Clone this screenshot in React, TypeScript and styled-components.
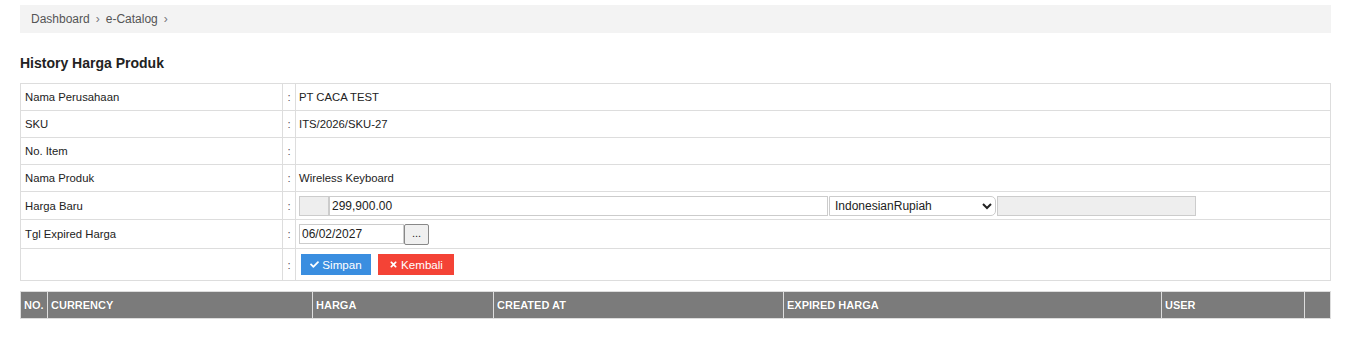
import * as React from 'react'
import styled, { createGlobalStyle } from 'styled-components'
import { FaCheck, FaTimes } from 'react-icons/fa'

const GlobalStyle = createGlobalStyle`
    body {
        margin: 0;
        background: #fff;
        font-family: "Liberation Sans", Arial, sans-serif;
        color: #333;
    }
`;

const Page = styled.div`
    padding: 5px 19px 0 20px;
`;

const Breadcrumb = styled.div`
    background: #f3f3f3;
    height: 28px;
    display: flex;
    align-items: center;
    padding-left: 11px;
    font-size: 12px;
    color: #555;
`;

const Sep = styled.span`
    margin: 0 6px;
    color: #777;
`;

const Title = styled.h3`
    font-size: 14px;
    font-weight: bold;
    color: #222;
    margin: 22px 0 0;
    height: 28px;
`;

const FormTable = styled.table`
    width: 100%;
    table-layout: fixed;
    border-collapse: collapse;
    border: 1px solid #ddd;
    font-size: 11.3px;
    color: #222;
`;

const Row = styled.tr<{ $h: number }>`
    height: ${p => p.$h}px;
    border-bottom: 1px solid #ddd;
`;

const Label = styled.td`
    padding: 0 4px;
    border-right: 1px solid #ddd;
    vertical-align: middle;
`;

const Colon = styled.td`
    text-align: center;
    padding: 0;
    border-right: 1px solid #ddd;
    color: #555;
`;

const Value = styled.td`
    padding: 0 3px;
`;

const Field = styled.div`
    display: flex;
    align-items: center;
`;

const AddOn = styled.span`
    width: 28px;
    height: 18px;
    background: #eee;
    border: 1px solid #ccc;
    box-sizing: content-box;
`;

const TextInput = styled.input<{ $w: number; $gray?: boolean }>`
    width: ${p => p.$w}px;
    height: 20px;
    box-sizing: border-box;
    border: 1px solid #ccc;
    background: ${p => (p.$gray ? '#eee' : '#fff')};
    font-family: "Liberation Sans", Arial, sans-serif;
    font-size: 12px;
    color: #222;
    padding: 1px 2px;
    margin: 0;
    outline: none;
`;

const Select = styled.select`
    width: 167px;
    height: 20px;
    border: 1px solid #ccc;
    border-radius: 0 5px 5px 0;
    background: #fff;
    font-family: "Liberation Sans", Arial, sans-serif;
    font-size: 12px;
    color: #222;
    margin: 0 1px;
    padding: 0 1px;
`;

const DotButton = styled.button`
    width: 25px;
    height: 21px;
    border: 1px solid #888;
    border-radius: 2px;
    background: #f0f0f0;
    font-size: 11px;
    color: #222;
    padding: 0 0 2px;
    margin: 0;
`;

const Buttons = styled.div`
    display: flex;
    gap: 7px;
    padding-left: 2px;
`;

const ActionButton = styled.button<{ $bg: string; $w: number }>`
    width: ${p => p.$w}px;
    height: 21px;
    border: none;
    background: ${p => p.$bg};
    color: #fff;
    font-family: "Liberation Sans", Arial, sans-serif;
    font-size: 11.6px;
    display: flex;
    align-items: center;
    justify-content: center;
    gap: 3px;
    padding: 0;
    svg {
        width: 9px;
        height: 9px;
    }
`;

const HistoryTable = styled.table`
    width: 100%;
    table-layout: fixed;
    border-collapse: collapse;
    margin-top: 10px;
    font-size: 11px;
`;

const Th = styled.th`
    background: #7b7b7b;
    color: #fff;
    font-weight: bold;
    text-align: left;
    height: 26px;
    padding: 0 3px;
    border: 1px solid #ddd;
    text-shadow: 0 0 1px rgba(0, 0, 0, 0.3);
    overflow: hidden;
    white-space: nowrap;
`;

const rows: { label: string; value: string; h: number }[] = [
    { label: 'Nama Perusahaan', value: 'PT CACA TEST', h: 27 },
    { label: 'SKU', value: 'ITS/2026/SKU-27', h: 27 },
    { label: 'No. Item', value: '', h: 27 },
    { label: 'Nama Produk', value: 'Wireless Keyboard', h: 27 },
];

const columns: { name: string; w?: number }[] = [
    { name: 'NO.', w: 27 },
    { name: 'CURRENCY', w: 265 },
    { name: 'HARGA', w: 181 },
    { name: 'CREATED AT', w: 290 },
    { name: 'EXPIRED HARGA', w: 378 },
    { name: 'USER', w: 143 },
    { name: '' },
];

export default function App(): React.ReactElement {
    return (
        <>
            <GlobalStyle />
            <Page>
                <Breadcrumb>
                    Dashboard<Sep>›</Sep>e-Catalog<Sep>›</Sep>
                </Breadcrumb>
                <Title>History Harga Produk</Title>
                <FormTable>
                    <colgroup>
                        <col style={{ width: 262 }} />
                        <col style={{ width: 13 }} />
                        <col />
                    </colgroup>
                    <tbody>
                        {rows.map(r => (
                            <Row key={r.label} $h={r.h}>
                                <Label>{r.label}</Label>
                                <Colon>:</Colon>
                                <Value>{r.value}</Value>
                            </Row>
                        ))}
                        <Row $h={28}>
                            <Label>Harga Baru</Label>
                            <Colon>:</Colon>
                            <Value>
                                <Field>
                                    <AddOn />
                                    <TextInput $w={499} defaultValue="299,900.00" />
                                    <Select defaultValue="IDR">
                                        <option value="IDR">IndonesianRupiah</option>
                                    </Select>
                                    <TextInput $w={199} $gray />
                                </Field>
                            </Value>
                        </Row>
                        <Row $h={29}>
                            <Label>Tgl Expired Harga</Label>
                            <Colon>:</Colon>
                            <Value>
                                <Field>
                                    <TextInput $w={105} defaultValue="06/02/2027" />
                                    <DotButton>...</DotButton>
                                </Field>
                            </Value>
                        </Row>
                        <Row $h={32}>
                            <Label></Label>
                            <Colon>:</Colon>
                            <Value>
                                <Buttons>
                                    <ActionButton $bg="#3a8ee0" $w={70}>
                                        <FaCheck /> Simpan
                                    </ActionButton>
                                    <ActionButton $bg="#f44336" $w={76}>
                                        <FaTimes /> Kembali
                                    </ActionButton>
                                </Buttons>
                            </Value>
                        </Row>
                    </tbody>
                </FormTable>
                <HistoryTable>
                    <colgroup>
                        {columns.map((c, i) => (
                            <col key={i} style={c.w ? { width: c.w } : undefined} />
                        ))}
                    </colgroup>
                    <thead>
                        <tr>
                            {columns.map((c, i) => (
                                <Th key={i}>{c.name}</Th>
                            ))}
                        </tr>
                    </thead>
                </HistoryTable>
            </Page>
        </>
    )
}
